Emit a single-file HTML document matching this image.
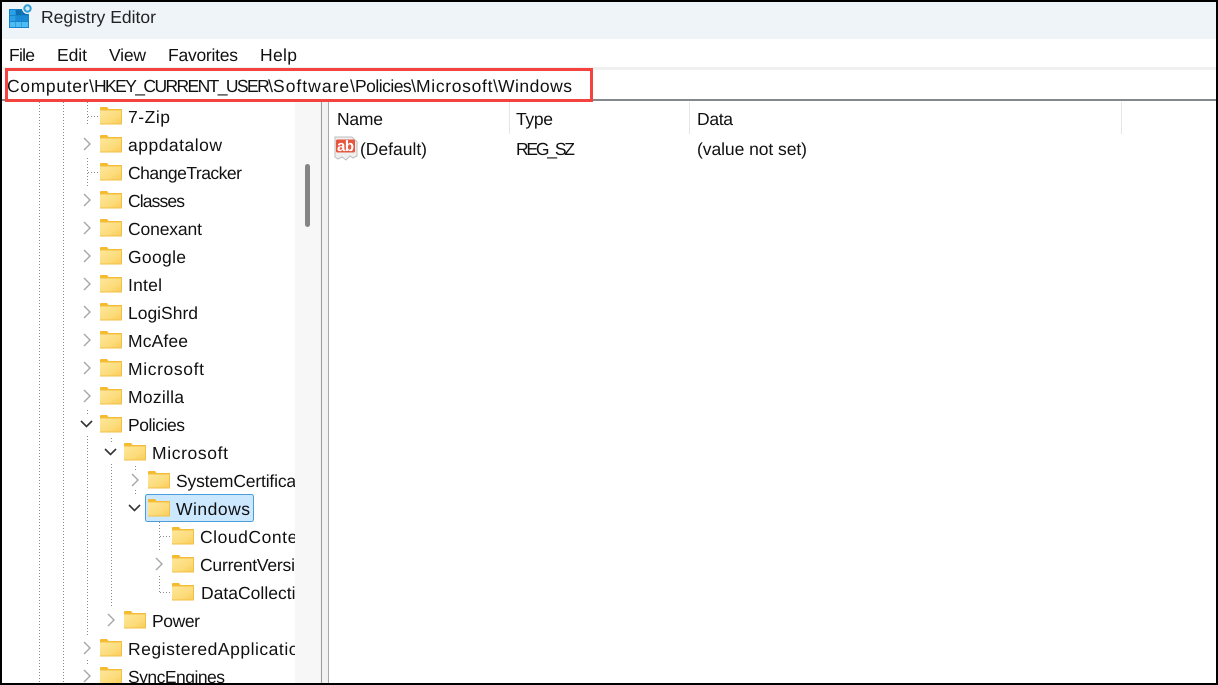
<!DOCTYPE html>
<html><head><meta charset="utf-8"><title>Registry Editor</title>
<style>
html,body{margin:0;padding:0;background:#fff;overflow:hidden}
svg{display:block}
text{font-family:"Liberation Sans",sans-serif;font-size:17.5px;fill:#111;text-rendering:geometricPrecision}
</style></head><body>
<svg width="1218" height="685" viewBox="0 0 1218 685" xmlns="http://www.w3.org/2000/svg">
<defs>
<linearGradient id="fg" x1="0" y1="0" x2="1" y2="1"><stop offset="0" stop-color="#fee79a"/><stop offset="0.6" stop-color="#fcdc7c"/><stop offset="1" stop-color="#f9cd5c"/></linearGradient>
<clipPath id="tc"><rect x="2" y="101" width="293" height="582"/></clipPath>
<g id="f">
<path d="M0 1Q0 0 1 0H7L8.500 2H22V4H0Z" fill="#f5b92c"/>
<rect x="0" y="2.500" width="22" height="15" fill="#f3c045"/>
<rect x="0" y="3.500" width="21" height="13" fill="url(#fg)"/>
</g>
<path id="cr" d="M0 0L6 6L0 12" fill="none" stroke="#a6a6a6" stroke-width="1.400"/>
<path id="cd" d="M0 0L5.500 5.500L11 0" fill="none" stroke="#333" stroke-width="1.600"/>
</defs>

<rect width="1218" height="685" fill="#fff"/>
<rect x="0" y="0" width="1218" height="39" fill="#eff4f9"/>

<!-- app icon -->
<g>
<rect x="9" y="9" width="20" height="19" fill="#1384cc"/>
<rect x="10" y="10" width="5.500" height="5" fill="#2aa0e6"/><rect x="16" y="10" width="5.500" height="5" fill="#0f6fb0"/><rect x="22" y="10" width="6" height="5" fill="#0f6fb0"/>
<rect x="10" y="16" width="5.500" height="5" fill="#2aa0e6"/><rect x="16" y="16" width="5.500" height="5" fill="#1a8ad4"/><rect x="22" y="16" width="6" height="5" fill="#1a8ad4"/>
<rect x="10" y="22" width="5.500" height="5" fill="#4cbcf2"/><rect x="16" y="22" width="5.500" height="5" fill="#4cbcf2"/><rect x="22" y="22" width="6" height="5" fill="#4cbcf2"/>
<circle cx="27.500" cy="8.500" r="5.500" fill="#eff4f9"/>
<circle cx="27.500" cy="8.500" r="3.200" fill="#cfe9f7" stroke="#2f9fd8" stroke-width="2"/>
</g>
<text x="41" y="23" textLength="115" lengthAdjust="spacing" style="fill:#222">Registry Editor</text>

<!-- menu -->
<text x="9" y="61" textLength="26" lengthAdjust="spacing">File</text>
<text x="57" y="61" textLength="30" lengthAdjust="spacing">Edit</text>
<text x="109" y="61" textLength="37" lengthAdjust="spacing">View</text>
<text x="168" y="61" textLength="70" lengthAdjust="spacing">Favorites</text>
<text x="260" y="61" textLength="37" lengthAdjust="spacing">Help</text>

<!-- address -->
<rect x="0" y="67" width="1218" height="3" fill="#f0f0f0"/>
<rect x="0" y="99" width="1218" height="2" fill="#84888c"/>
<text x="7" y="92" textLength="87" lengthAdjust="spacing">Computer\</text>
<text x="94" y="92" textLength="179" lengthAdjust="spacing">HKEY_CURRENT_USER\</text>
<text x="273" y="92" textLength="82" lengthAdjust="spacing">Software\</text>
<text x="355" y="92" textLength="61" lengthAdjust="spacing">Policies\</text>
<text x="416" y="92" textLength="82" lengthAdjust="spacing">Microsoft\</text>
<text x="498" y="92" textLength="74" lengthAdjust="spacing">Windows</text>
<rect x="6.500" y="69.500" width="585" height="31" fill="none" stroke="#f4433f" stroke-width="3"/>

<!-- scrollbar + splitter -->
<rect x="295" y="102" width="25" height="583" fill="#f7f7f7"/>
<rect x="320" y="102" width="9" height="583" fill="#f2f2f2"/>
<rect x="321" y="102" width="1" height="583" fill="#9c9c9c"/>
<rect x="328" y="102" width="1" height="583" fill="#a8a8a8"/>
<rect x="305" y="164" width="5" height="63" rx="2.500" fill="#858585"/>

<!-- dotted tree lines -->
<g stroke="#8a8a8a" stroke-width="1" stroke-dasharray="1 2" fill="none">
<path d="M39.500 102V683M63.500 102V683"/>
<path d="M87.500 102V126M88 116.500H99M87.500 158V188M88 172.500H99"/>
<path d="M87.500 436V635M111.500 464V607"/>
<path d="M135.500 466V472M135.500 490V494"/>
<path d="M159.500 522V550M160 536.500H171M159.500 576V592M160 592.500H171"/>
<path d="M87.500 410V414M111.500 438V442M87.500 660V664"/>
</g>

<!-- selection -->
<rect x="145.500" y="494.500" width="108" height="27" rx="2" fill="#cce8ff" stroke="#4a9dd8" stroke-width="1"/>

<!-- folders -->
<g>
<use href="#f" x="100" y="107"/><use href="#f" x="100" y="135"/><use href="#f" x="100" y="163"/><use href="#f" x="100" y="191"/>
<use href="#f" x="100" y="219"/><use href="#f" x="100" y="247"/><use href="#f" x="100" y="275"/><use href="#f" x="100" y="303"/>
<use href="#f" x="100" y="331"/><use href="#f" x="100" y="359"/><use href="#f" x="100" y="387"/><use href="#f" x="100" y="415"/>
<use href="#f" x="124" y="443"/><use href="#f" x="148" y="471"/><use href="#f" x="148" y="499"/>
<use href="#f" x="172" y="527"/><use href="#f" x="172" y="555"/><use href="#f" x="172" y="583"/>
<use href="#f" x="124" y="611"/><use href="#f" x="100" y="639"/><use href="#f" x="100" y="667"/>
</g>

<!-- chevrons -->
<g>
<use href="#cr" x="84" y="138"/><use href="#cr" x="84" y="194"/><use href="#cr" x="84" y="222"/><use href="#cr" x="84" y="250"/>
<use href="#cr" x="84" y="278"/><use href="#cr" x="84" y="306"/><use href="#cr" x="84" y="334"/><use href="#cr" x="84" y="362"/><use href="#cr" x="84" y="390"/>
<use href="#cd" x="81" y="421"/><use href="#cd" x="105" y="449"/>
<use href="#cr" x="132" y="474"/><use href="#cd" x="129" y="505"/>
<use href="#cr" x="156" y="558"/><use href="#cr" x="108" y="614"/><use href="#cr" x="84" y="642"/><use href="#cr" x="84" y="670"/>
</g>

<!-- tree text -->
<g clip-path="url(#tc)">
<text x="128" y="123" textLength="42" lengthAdjust="spacing">7-Zip</text>
<text x="128" y="151" textLength="94" lengthAdjust="spacing">appdatalow</text>
<text x="128" y="179" textLength="114" lengthAdjust="spacing">ChangeTracker</text>
<text x="128" y="207" textLength="57" lengthAdjust="spacing">Classes</text>
<text x="128" y="235" textLength="74" lengthAdjust="spacing">Conexant</text>
<text x="128" y="263" textLength="58" lengthAdjust="spacing">Google</text>
<text x="128" y="291" textLength="34" lengthAdjust="spacing">Intel</text>
<text x="128" y="319" textLength="70" lengthAdjust="spacing">LogiShrd</text>
<text x="128" y="347" textLength="60" lengthAdjust="spacing">McAfee</text>
<text x="128" y="375" textLength="76" lengthAdjust="spacing">Microsoft</text>
<text x="128" y="403" textLength="56" lengthAdjust="spacing">Mozilla</text>
<text x="128" y="431" textLength="57" lengthAdjust="spacing">Policies</text>
<text x="152" y="459" textLength="76" lengthAdjust="spacing">Microsoft</text>
<text x="176" y="487" textLength="143" lengthAdjust="spacing">SystemCertificates</text>
<text x="176" y="515" textLength="74" lengthAdjust="spacing">Windows</text>
<text x="200" y="543" textLength="113" lengthAdjust="spacing">CloudContent</text>
<text x="200" y="571" textLength="114" lengthAdjust="spacing">CurrentVersion</text>
<text x="201" y="599" textLength="114" lengthAdjust="spacing">DataCollection</text>
<text x="152" y="627" textLength="48" lengthAdjust="spacing">Power</text>
<text x="128" y="655" textLength="190" lengthAdjust="spacing">RegisteredApplications</text>
<text x="128" y="683" textLength="97" lengthAdjust="spacing">SyncEngines</text>
</g>

<!-- list header -->
<g fill="#e6e6e6"><rect x="509" y="102" width="1" height="32"/><rect x="689" y="102" width="1" height="32"/><rect x="1121" y="102" width="1" height="32"/></g>
<text x="337" y="125" textLength="46" lengthAdjust="spacing">Name</text>
<text x="516" y="125" textLength="37" lengthAdjust="spacing">Type</text>
<text x="697" y="125" textLength="36" lengthAdjust="spacing">Data</text>

<!-- value row -->
<g>
<path d="M335 137H352L357 142V156L353 158L350 156L346 160L342 157L338 159L335 157Z" fill="#efefef" stroke="#bdbdbd" stroke-width="1"/>
<rect x="336" y="139.500" width="19" height="13" rx="1.500" fill="#e8553e"/>
<text x="337" y="151" textLength="17" lengthAdjust="spacing" style="font-size:15px;font-weight:bold;fill:#fff">ab</text>
</g>
<text x="360" y="155" textLength="67" lengthAdjust="spacing">(Default)</text>
<text x="516" y="155" textLength="59" lengthAdjust="spacing">REG_SZ</text>
<text x="697" y="155" textLength="110" lengthAdjust="spacing">(value not set)</text>

<!-- outer border -->
<rect x="0" y="0" width="1218" height="2" fill="#000"/>
<rect x="0" y="683" width="1218" height="2" fill="#000"/>
<rect x="0" y="0" width="2" height="685" fill="#000"/>
<rect x="1216" y="0" width="2" height="685" fill="#000"/>
</svg>
</body></html>
